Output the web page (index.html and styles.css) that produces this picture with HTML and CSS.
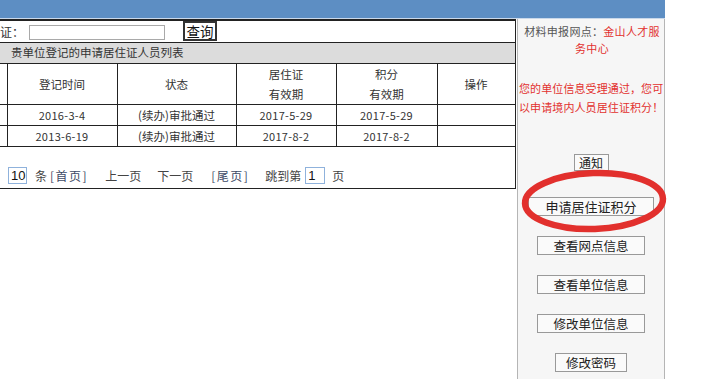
FILE: index.html
```html
<!DOCTYPE html>
<html lang="zh-CN">
<head>
<meta charset="utf-8">
<link rel="stylesheet" href="styles.css">
</head>
<body>
<div class="page">
  <div class="topbar"></div>
  <div class="content">
    <div class="main">
      <div class="search-row">
        <span class="search-label">证：</span>
        <input class="search-input" type="text">
        <button class="search-btn">查询</button>
      </div>
      <div class="title-row">贵单位登记的申请居住证人员列表</div>
      <table class="grid">
        <colgroup>
          <col class="c0"><col class="c1"><col class="c2"><col class="c3"><col class="c4"><col class="c5">
        </colgroup>
        <tr class="head">
          <td class="first"></td>
          <td>登记时间</td>
          <td>状态</td>
          <td>居住证<br>有效期</td>
          <td>积分<br>有效期</td>
          <td>操作</td>
        </tr>
        <tr class="row">
          <td class="first"></td>
          <td class="num">2016-3-4</td>
          <td>(续办)审批通过</td>
          <td class="num">2017-5-29</td>
          <td class="num">2017-5-29</td>
          <td></td>
        </tr>
        <tr class="row">
          <td class="first"></td>
          <td class="num">2013-6-19</td>
          <td>(续办)审批通过</td>
          <td class="num">2017-8-2</td>
          <td class="num">2017-8-2</td>
          <td></td>
        </tr>
      </table>
      <div class="pager">
        <input class="pg-input pg-size" type="text" value="10">
        <span class="pg-t">条</span>
        <span class="pg-link pg-first">[首页]</span>
        <span class="pg-t pg-prev">上一页</span>
        <span class="pg-t pg-next">下一页</span>
        <span class="pg-link pg-last">[尾页]</span>
        <span class="pg-t pg-jump">跳到第</span>
        <input class="pg-input pg-page" type="text" value="1">
        <span class="pg-t">页</span>
      </div>
    </div>
    <div class="side">
      <div class="side-info">
        <div class="info-line">材料申报网点：<span class="red">金山人才服</span></div>
        <div class="info-line red">务中心</div>
      </div>
      <div class="side-note">您的单位信息受理通过，您可以申请境内人员居住证积分！</div>
      <div class="side-buttons">
        <button class="sbtn sbtn-notice">通知</button>
        <button class="sbtn sbtn-wide">申请居住证积分</button>
        <button class="sbtn">查看网点信息</button>
        <button class="sbtn">查看单位信息</button>
        <button class="sbtn">修改单位信息</button>
        <button class="sbtn sbtn-small">修改密码</button>
      </div>
    </div>
  </div>
  <svg class="circle" width="160" height="72" viewBox="0 0 160 72">
    <ellipse cx="80" cy="36" rx="69" ry="28" fill="none" stroke="#e2302d" stroke-width="6.5"/>
  </svg>
</div>
</body>
</html>
```

FILE: styles.css
```css
* { box-sizing: border-box; }
html, body { margin: 0; padding: 0; background: #fff; }
body {
  font-family: "Noto Sans CJK SC", "Liberation Sans", sans-serif;
  font-size: 11.5px;
  color: #333;
  width: 721px;
  height: 379px;
  overflow: hidden;
}
.page { position: relative; width: 721px; height: 379px; }
.topbar {
  width: 665px;
  height: 19px;
  background: #5d8ec3;
  border-bottom: 1px solid #c9d8ea;
}
.content { display: flex; align-items: stretch; height: 360px; }
.main {
  width: 516px;
  height: 170px;
  border-top: 2px solid #222;
  border-right: 1px solid #222;
  border-bottom: 1px solid #222;
  display: flex;
  flex-direction: column;
}
.search-row {
  height: 22px;
  display: flex;
  align-items: center;
  border-bottom: 1px solid #222;
}
.search-label { width: 29px; font-size: 12px; color: #333; }
.search-input {
  width: 136px;
  height: 15px;
  border: 1px solid #a9a9a9;
  margin: 2px 0 0 0;
  padding: 0;
}
.search-btn {
  margin-left: 18px;
  margin-top: -1px;
  width: 34px;
  height: 20px;
  padding: 0;
  border: 2px solid #333;
  background: #fff;
  font-family: "Noto Sans CJK SC", sans-serif;
  font-size: 13.5px;
  line-height: 15px;
  color: #111;
}
.title-row {
  height: 20px;
  background: #dcdcdc;
  padding-left: 11px;
  line-height: 19px;
  color: #333;
}
.grid {
  border-collapse: collapse;
  table-layout: fixed;
  width: 515px;
}
.c0 { width: 7px; }
.c1 { width: 110px; }
.c2 { width: 119px; }
.c3 { width: 100px; }
.c4 { width: 101px; }
.c5 { width: 78px; }
.grid td {
  border: 1px solid #222;
  text-align: center;
  padding: 0;
  color: #333;
}
.grid td.first { border-left: none; }
.grid tr.head td { height: 41px; line-height: 20px; }
.grid tr.row td { height: 21px; line-height: 19px; }
.grid td.num { font-size: 11px; letter-spacing: 0.3px; }
.pager {
  flex: 1;
  display: flex;
  align-items: center;
  padding-left: 8px;
  padding-top: 16px;
  font-size: 12px;
}
.pg-input {
  height: 17px;
  border: 1px solid #8fb2dc;
  padding: 0 0 0 2px;
  font-family: "Liberation Sans", sans-serif;
  font-size: 13px;
  color: #111;
}
.pg-size { width: 19px; margin-right: 8px; }
.pg-page { width: 20px; margin: 0 7px 0 4px; }
.pg-t { color: #444; }
.pg-link { color: #3d4a66; letter-spacing: 1.5px; }
.pg-first { margin-left: 3px; }
.pg-prev { margin-left: 17px; }
.pg-next { margin-left: 16px; }
.pg-last { margin-left: 18px; }
.pg-jump { margin-left: 16px; }
.side {
  width: 148px;
  margin-left: 1px;
  background: #f6f6f6;
  border-left: 1px solid #b5b5b5;
  border-right: 1px solid #b5b5b5;
  display: flex;
  flex-direction: column;
  align-items: stretch;
  text-align: center;
}
.side-info {
  padding: 4px 4px 0 6px;
  font-size: 11px;
  letter-spacing: 0.3px;
  line-height: 17px;
  color: #555;
}
.info-line { white-space: nowrap; }
.red { color: #e2312e; }
.side-note {
  margin-top: 22px;
  padding: 0 0 0 1px;
  font-size: 11px;
  letter-spacing: 0.1px;
  line-height: 19px;
  color: #e2312e;
  text-align: left;
}
.side-buttons {
  margin-top: 37px;
  display: flex;
  flex-direction: column;
  align-items: center;
  gap: 20px;
}
.sbtn {
  width: 108px;
  height: 19px;
  padding: 0;
  border: 1px solid #999;
  background: #fafafa;
  font-family: "Noto Sans CJK SC", sans-serif;
  font-size: 12.5px;
  line-height: 16px;
  color: #222;
}
.sbtn-notice { width: 35px; height: 17px; font-size: 12px; line-height: 14px; margin-bottom: 6px; }
.sbtn-wide { width: 126px; font-size: 13px; }
.sbtn-small { width: 72px; }
.circle {
  position: absolute;
  left: 514px;
  top: 165px;
  transform: rotate(-2deg);
}
```
